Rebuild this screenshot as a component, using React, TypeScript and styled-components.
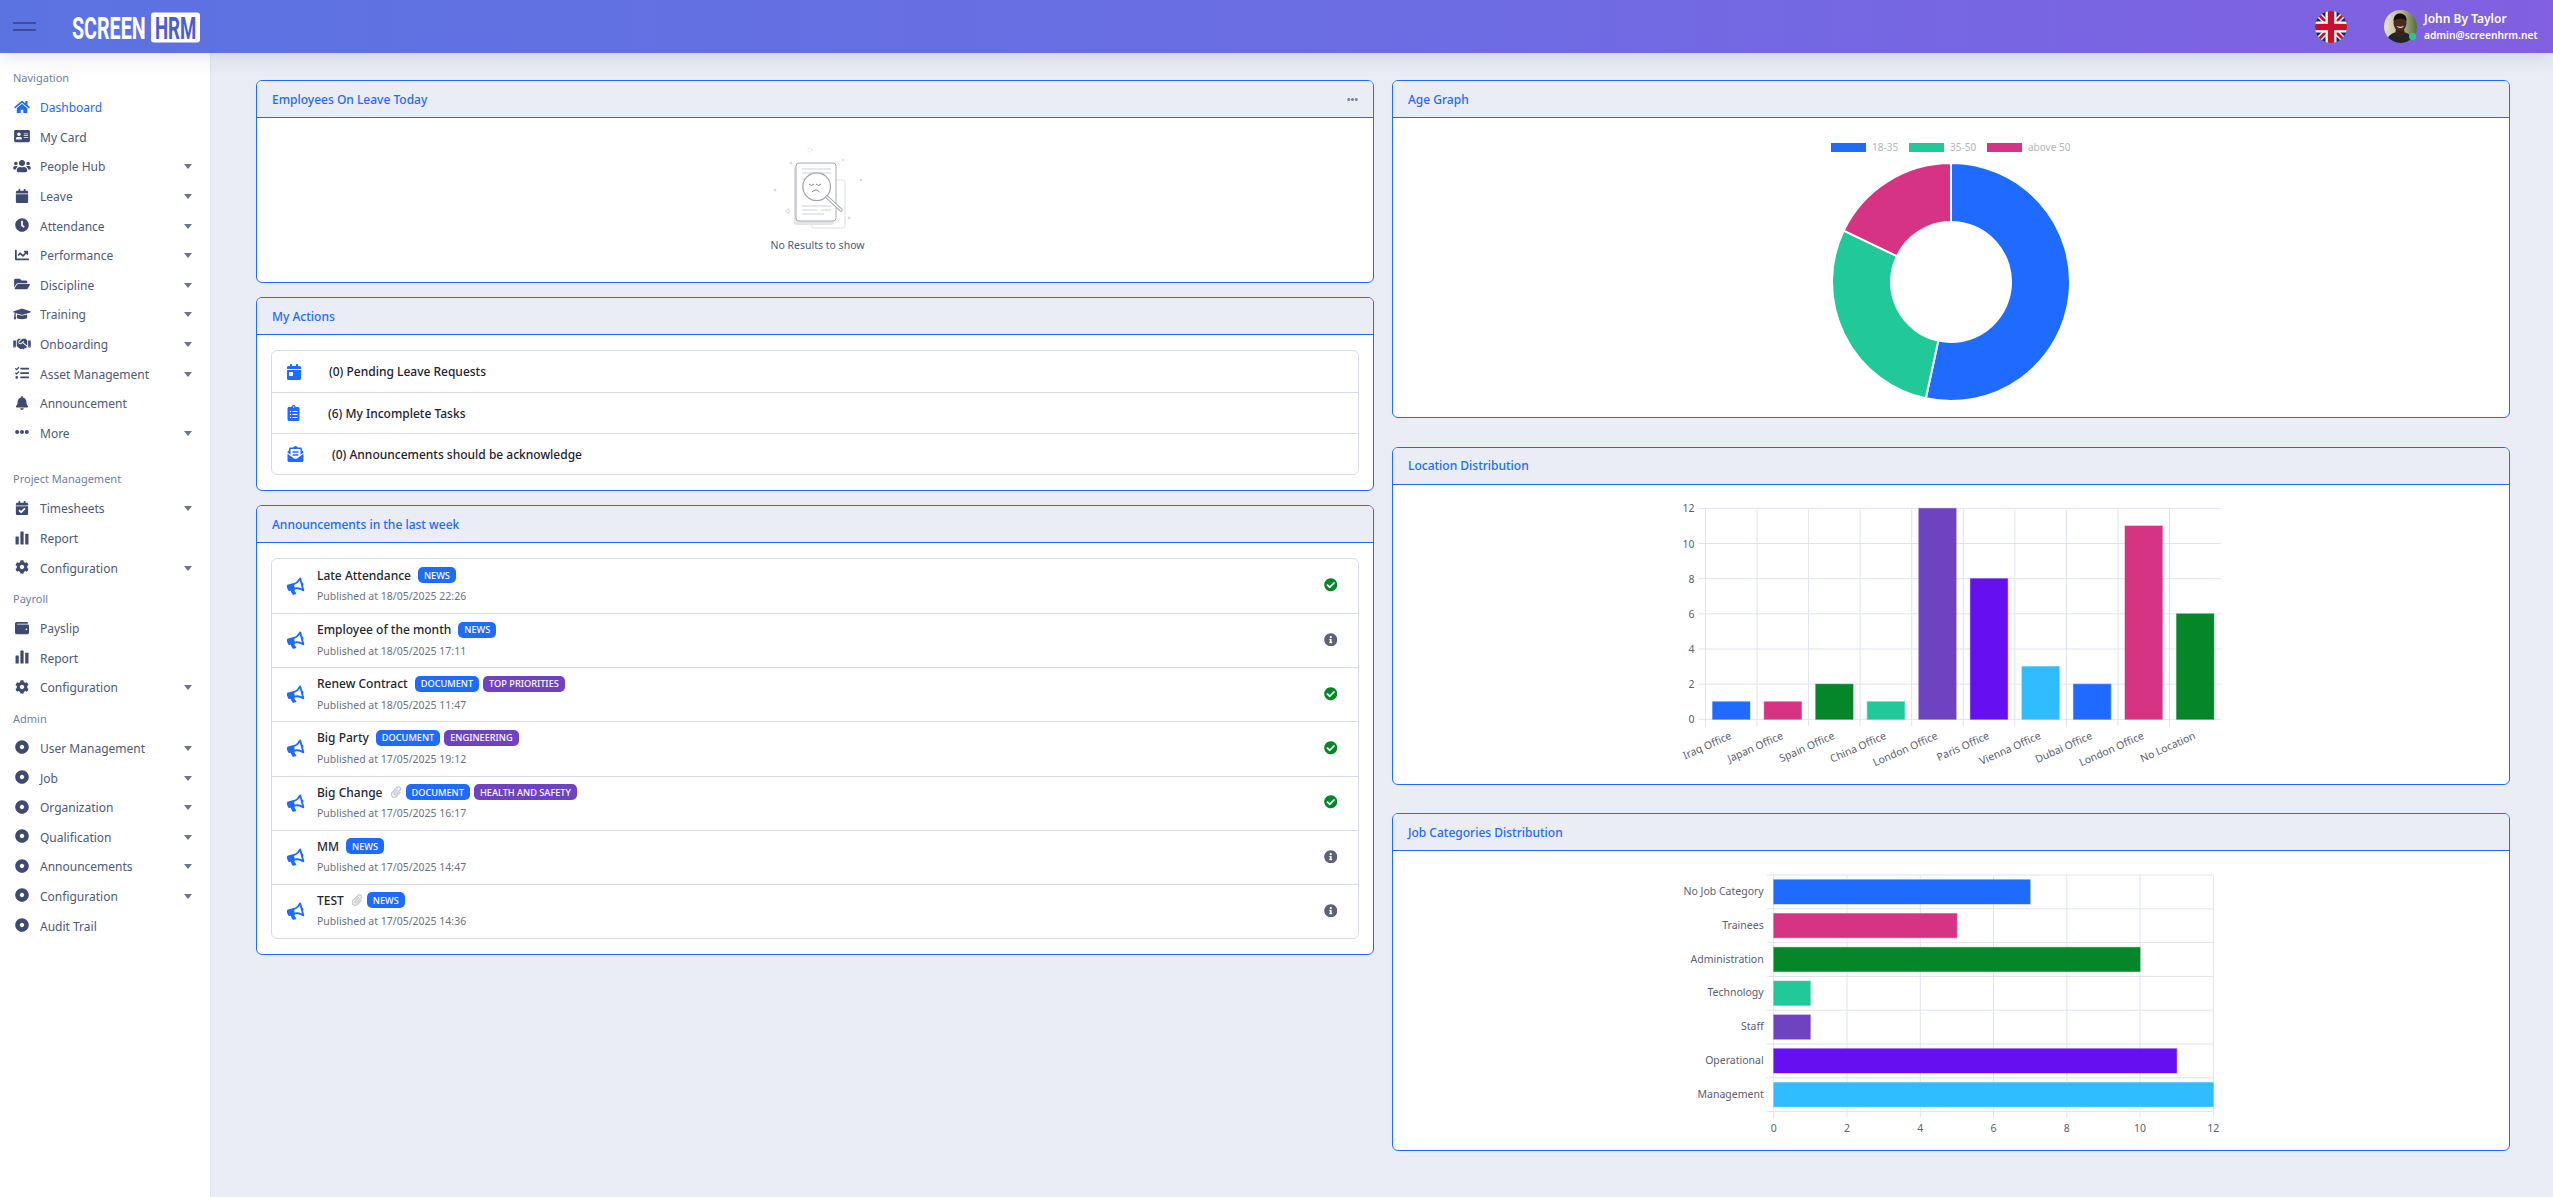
import type { ReactNode } from "react";
import styled, { createGlobalStyle } from "styled-components";
import {
  FaAddressCard,
  FaBell,
  FaBullhorn,
  FaCalendar,
  FaCalendarCheck,
  FaCalendarDay,
  FaChartLine,
  FaCheckCircle,
  FaClipboardList,
  FaClock,
  FaCog,
  FaDotCircle,
  FaEllipsisH,
  FaEnvelopeOpenText,
  FaFolderOpen,
  FaGraduationCap,
  FaHandshake,
  FaHome,
  FaInfoCircle,
  FaPaperclip,
  FaTasks,
  FaUsers,
  FaWallet,
} from "react-icons/fa";

const BLUE = "#206bff";
const PINK = "#d63384";
const GREEN = "#058729";
const TEAL = "#20c997";
const PURPLE = "#6f42c1";
const VIOLET = "#6610f2";
const SKY = "#30bdff";
const PAGE_BG = "#eaedf5";
const FONT = `"Noto Sans", "Liberation Sans", sans-serif`;

const GlobalStyle = createGlobalStyle`
  html, body {
    margin: 0;
    padding: 0;
    background: ${PAGE_BG};
    font-family: ${FONT};
    overflow: hidden;
  }
  * {
    box-sizing: border-box;
  }
`;

const Shell = styled.div`
  width: 2553px;
  height: 1197px;
  display: flex;
  flex-direction: column;
  overflow: hidden;
`;

const TopBar = styled.header`
  position: relative;
  z-index: 2;
  flex: none;
  height: 53px;
  display: flex;
  align-items: center;
  padding-left: 13px;
  padding-right: 14px;
  background: linear-gradient(90deg, #5b73e0 0%, #6a6ee2 50%, #8260e0 100%);
  box-shadow: 0 4px 20px rgba(50, 60, 90, 0.14);
`;

const Burger = styled.div`
  width: 23px;
  height: 9px;
  margin-right: 36px;
  border-top: 2px solid #3f4c96;
  border-bottom: 2px solid #3f4c96;
`;

const TopRight = styled.div`
  margin-left: auto;
  display: flex;
  align-items: center;
`;

const FlagBox = styled.div`
  width: 32px;
  height: 32px;
  margin-right: 37px;
  display: flex;
`;

const AvatarBox = styled.div`
  position: relative;
  width: 33px;
  height: 33px;
  margin-right: 7px;
  display: flex;
`;

const OnlineDot = styled.span`
  position: absolute;
  right: 1px;
  bottom: 3px;
  width: 7px;
  height: 7px;
  border-radius: 50%;
  background: #28c98b;
`;

const UserInfo = styled.div`
  display: flex;
  flex-direction: column;
  gap: 2px;
  width: 115px;
  color: #fff;
`;

const UserName = styled.span`
  font-size: 12px;
  font-weight: 600;
  line-height: 15px;
`;

const UserMail = styled.span`
  font-size: 10.2px;
  font-weight: 600;
  line-height: 15px;
`;

const Body = styled.div`
  flex: 1;
  display: flex;
  min-height: 0;
`;

const Sidebar = styled.nav`
  flex: none;
  width: 211px;
  padding-top: 10px;
  background: #fff;
  border-right: 1px solid #dfe3ec;
`;

const NavGroup = styled.div<{ $gap?: number }>`
  margin-bottom: ${(p) => p.$gap ?? 0}px;
`;

const NavLabel = styled.div`
  height: 30px;
  line-height: 30px;
  padding-left: 13px;
  font-size: 11px;
  color: #6f80a3;
`;

const NavItem = styled.div<{ $active?: boolean }>`
  height: 29.6px;
  display: flex;
  align-items: center;
  padding: 0 18px 0 10px;
  font-size: 12px;
  color: ${(p) => (p.$active ? BLUE : "#4d5a78")};
  svg {
    color: ${(p) => (p.$active ? BLUE : "#3e4a70")};
  }
`;

const NavIcon = styled.span`
  width: 24px;
  margin-right: 6px;
  margin-bottom: 2px;
  flex: none;
  display: flex;
  align-items: center;
  justify-content: center;
  svg {
    width: 18px;
    height: 14px;
  }
`;

const Caret = styled.span`
  margin-left: auto;
  width: 0;
  height: 0;
  border-left: 4.5px solid transparent;
  border-right: 4.5px solid transparent;
  border-top: 5px solid #6c7590;
`;

const Main = styled.main`
  flex: 1;
  min-width: 0;
  padding: 27px 0 0 45px;
  display: grid;
  grid-template-columns: 1118px 1118px;
  column-gap: 18px;
  align-content: start;
`;

const Column = styled.div<{ $gap: number }>`
  display: flex;
  flex-direction: column;
  gap: ${(p) => p.$gap}px;
`;

const Card = styled.section<{ $height?: number }>`
  height: ${(p) => (p.$height ? `${p.$height}px` : "auto")};
  display: flex;
  flex-direction: column;
  border: 1px solid ${BLUE};
  border-radius: 6px;
  background: #fff;
  overflow: hidden;
`;

const CardHeader = styled.div`
  flex: none;
  height: 37px;
  display: flex;
  align-items: center;
  justify-content: space-between;
  padding: 0 15px;
  background: ${PAGE_BG};
  border-bottom: 1px solid ${BLUE};
  color: ${BLUE};
  font-size: 12px;
  font-weight: 500;
`;

const DotsIcon = styled.span`
  display: flex;
  color: #7d8499;
  font-size: 11px;
`;

const CardBody = styled.div`
  flex: 1;
  padding: 15px 14px;
`;

const ChartBody = styled.div`
  flex: 1;
  display: flex;
  justify-content: center;
`;

const EmptyBody = styled.div`
  flex: 1;
  display: flex;
  flex-direction: column;
  align-items: center;
  padding: 27px 0 0 5px;
`;

const EmptyText = styled.div`
  margin-top: 9px;
  font-size: 10.5px;
  line-height: 14px;
  color: #4a5b7a;
`;

const ListBox = styled.div`
  border: 1px solid #d8dce6;
  border-radius: 6px;
`;

const ActionRow = styled.div`
  height: 41px;
  display: flex;
  align-items: center;
  padding-left: 15px;
  font-size: 12px;
  font-weight: 500;
  color: #1d2130;
  & + & {
    border-top: 1px solid #d8dce6;
  }
`;

const ActionIcon = styled.span<{ $w: number }>`
  width: ${(p) => p.$w}px;
  display: flex;
  color: ${BLUE};
  margin-right: 28px;
  svg {
    width: 100%;
    height: 16px;
  }
`;

const NoticeRow = styled.div`
  height: 54.15px;
  display: flex;
  align-items: center;
  padding: 0 21px 0 15px;
  & + & {
    border-top: 1px solid #d8dce6;
  }
`;

const NoticeIcon = styled.span`
  flex: none;
  width: 30px;
  display: flex;
  font-size: 17px;
  color: ${BLUE};
  svg {
    transform: rotate(-15deg);
  }
`;

const NoticeText = styled.div`
  display: flex;
  flex-direction: column;
  gap: 6px;
  padding-bottom: 2px;
`;

const NoticeTitle = styled.div`
  display: flex;
  align-items: center;
  height: 16px;
  font-size: 12px;
  font-weight: 500;
  color: #22262f;
`;

const NoticeTime = styled.div`
  font-size: 10.5px;
  line-height: 14px;
  color: #6b7280;
`;

const Clip = styled.span`
  display: flex;
  margin-left: 7px;
  font-size: 12px;
  color: #c9cdd8;
`;

const Badge = styled.span<{ $tone: string }>`
  height: 16px;
  display: inline-flex;
  align-items: center;
  padding: 0 6px;
  margin-left: 4px;
  border-radius: 5px;
  background: ${(p) => p.$tone};
  color: #fff;
  font-size: 9.2px;
  font-weight: 500;
  &:first-of-type {
    margin-left: 7px;
  }
`;

const StatusIcon = styled.span<{ $tone: string }>`
  margin-left: auto;
  margin-bottom: 2px;
  display: flex;
  font-size: 13.5px;
  color: ${(p) => p.$tone};
`;

type NavEntry = { label: string; icon: ReactNode; caret?: boolean; active?: boolean };

function ReportIcon() {
  return (
    <svg viewBox="0 0 13 13" fill="currentColor">
      <rect x="0.5" y="5" width="3" height="7.5" rx="0.5" />
      <rect x="5" y="0.5" width="3" height="12" rx="0.5" />
      <rect x="9.5" y="2.5" width="3" height="10" rx="0.5" />
    </svg>
  );
}

const navSections: { title: string; gap: number; items: NavEntry[] }[] = [
  {
    title: "Navigation",
    gap: 16,
    items: [
      { label: "Dashboard", icon: <FaHome />, active: true },
      { label: "My Card", icon: <FaAddressCard /> },
      { label: "People Hub", icon: <FaUsers />, caret: true },
      { label: "Leave", icon: <FaCalendar />, caret: true },
      { label: "Attendance", icon: <FaClock />, caret: true },
      { label: "Performance", icon: <FaChartLine />, caret: true },
      { label: "Discipline", icon: <FaFolderOpen />, caret: true },
      { label: "Training", icon: <FaGraduationCap />, caret: true },
      { label: "Onboarding", icon: <FaHandshake />, caret: true },
      { label: "Asset Management", icon: <FaTasks />, caret: true },
      { label: "Announcement", icon: <FaBell /> },
      { label: "More", icon: <FaEllipsisH />, caret: true },
    ],
  },
  {
    title: "Project Management",
    gap: 1,
    items: [
      { label: "Timesheets", icon: <FaCalendarCheck />, caret: true },
      { label: "Report", icon: <ReportIcon /> },
      { label: "Configuration", icon: <FaCog />, caret: true },
    ],
  },
  {
    title: "Payroll",
    gap: 1,
    items: [
      { label: "Payslip", icon: <FaWallet /> },
      { label: "Report", icon: <ReportIcon /> },
      { label: "Configuration", icon: <FaCog />, caret: true },
    ],
  },
  {
    title: "Admin",
    gap: 0,
    items: [
      { label: "User Management", icon: <FaDotCircle />, caret: true },
      { label: "Job", icon: <FaDotCircle />, caret: true },
      { label: "Organization", icon: <FaDotCircle />, caret: true },
      { label: "Qualification", icon: <FaDotCircle />, caret: true },
      { label: "Announcements", icon: <FaDotCircle />, caret: true },
      { label: "Configuration", icon: <FaDotCircle />, caret: true },
      { label: "Audit Trail", icon: <FaDotCircle /> },
    ],
  },
];

const actions = [
  { text: "(0) Pending Leave Requests", icon: <FaCalendarDay />, w: 14 },
  { text: "(6) My Incomplete Tasks", icon: <FaClipboardList />, w: 13 },
  { text: "(0) Announcements should be acknowledge", icon: <FaEnvelopeOpenText />, w: 17 },
];

const notices: {
  title: string;
  time: string;
  clip?: boolean;
  done: boolean;
  tags: [string, string][];
}[] = [
  { title: "Late Attendance", time: "18/05/2025 22:26", done: true, tags: [["NEWS", BLUE]] },
  { title: "Employee of the month", time: "18/05/2025 17:11", done: false, tags: [["NEWS", BLUE]] },
  {
    title: "Renew Contract",
    time: "18/05/2025 11:47",
    done: true,
    tags: [
      ["DOCUMENT", BLUE],
      ["TOP PRIORITIES", PURPLE],
    ],
  },
  {
    title: "Big Party",
    time: "17/05/2025 19:12",
    done: true,
    tags: [
      ["DOCUMENT", BLUE],
      ["ENGINEERING", PURPLE],
    ],
  },
  {
    title: "Big Change",
    time: "17/05/2025 16:17",
    clip: true,
    done: true,
    tags: [
      ["DOCUMENT", BLUE],
      ["HEALTH AND SAFETY", PURPLE],
    ],
  },
  { title: "MM", time: "17/05/2025 14:47", done: false, tags: [["NEWS", BLUE]] },
  { title: "TEST", time: "17/05/2025 14:36", clip: true, done: false, tags: [["NEWS", BLUE]] },
];

function Logo() {
  return (
    <svg width="130" height="44" viewBox="0 0 130 44">
      <text
        transform="translate(0 33.5) scale(0.635 1)"
        fill="#fff"
        fontFamily="Roboto, sans-serif"
        fontWeight="700"
        fontSize="31"
      >
        SCREEN
      </text>
      <rect x="79" y="7.5" width="49" height="30" rx="3" fill="#fff" />
      <text
        transform="translate(83 33.5) scale(0.6 1)"
        fill="#4a5dcf"
        fontFamily="Roboto, sans-serif"
        fontWeight="700"
        fontSize="31"
      >
        HRM
      </text>
    </svg>
  );
}

function UkFlag() {
  return (
    <svg width="32" height="32" viewBox="0 0 32 32">
      <defs>
        <clipPath id="flagClip">
          <circle cx="16" cy="16" r="16" />
        </clipPath>
      </defs>
      <g clipPath="url(#flagClip)">
        <rect width="32" height="32" fill="#0a2a6e" />
        <path d="M-2 2 L2 -2 L34 30 L30 34 Z M30 -2 L34 2 L2 34 L-2 30 Z" fill="#fff" />
        <path d="M-2 0 L0 -2 L34 32 L32 34 Z M32 -2 L34 0 L0 34 L-2 32 Z" fill="#c8102e" />
        <rect x="10.5" width="11" height="32" fill="#fff" />
        <rect y="10.5" width="32" height="11" fill="#fff" />
        <rect x="12.8" width="6.4" height="32" fill="#c8102e" />
        <rect y="12.8" width="32" height="6.4" fill="#c8102e" />
      </g>
    </svg>
  );
}

function Avatar() {
  return (
    <svg width="33" height="33" viewBox="0 0 33 33">
      <defs>
        <clipPath id="avatarClip">
          <circle cx="16.5" cy="16.5" r="16.5" />
        </clipPath>
        <linearGradient id="avatarBg" x1="0" x2="1" y1="0" y2="0">
          <stop offset="0" stopColor="#e9e2d8" />
          <stop offset="0.55" stopColor="#b9b48e" />
          <stop offset="1" stopColor="#4f6e3a" />
        </linearGradient>
      </defs>
      <g clipPath="url(#avatarClip)">
        <rect width="33" height="33" fill="url(#avatarBg)" />
        <path d="M2 33 C3 25 9 22 16 22 C23 22 29 25 30 33 Z" fill="#23242b" />
        <path d="M12 19 L20 19 L21 24 L16 28 L11 24 Z" fill="#3a2418" />
        <ellipse cx="16" cy="13" rx="6.5" ry="8" fill="#4a2d1e" />
        <path d="M9.5 11 C9.5 5 13 3.5 16 3.5 C19.5 3.5 23 5.5 22.5 11 C20 8 13 8 9.5 11 Z" fill="#15100c" />
        <path d="M12.5 16 C14 18.5 18.5 18.5 20 16 C18 17 14.5 17 12.5 16 Z" fill="#efe8de" />
      </g>
    </svg>
  );
}

function EmptyPicture() {
  return (
    <svg width="110" height="84" viewBox="-6 -5 110 84">
      <g fill="none" stroke="#c9ccd1" strokeWidth="0.8">
        <circle cx="41" cy="0" r="2" strokeDasharray="1 1" />
        <path d="M20.5 13h3M22 11.500v3M4.500 40h3M6 38.500v3M73 10h2M74 9v2M91 29l2 2M93 29l-2 2M78.500 68h3M80 66.500v3" />
        <path d="M20 63.500l-3.500 -2.500 3.500 -2.500z" />
      </g>
      <rect x="43" y="30" width="33" height="48" rx="2" fill="#fff" stroke="#dcdee2" strokeWidth="1" />
      <rect x="25" y="16" width="40" height="59" rx="3" fill="#e3e4e7" />
      <rect x="27" y="13" width="40" height="58" rx="3" fill="#fff" stroke="#a9acb2" strokeWidth="1" />
      <path
        d="M33 19h29M33 23h29M33 29h6M33 34h6M33 39h5M33 56h29M33 60h15M52 60h10M33 64h22"
        stroke="#dfe1e4"
        strokeWidth="1.600"
      />
      <circle cx="47.700" cy="36.700" r="13.800" fill="#fff" stroke="#a3a6ac" strokeWidth="1.200" />
      <path d="M58 47 L72 60" stroke="#a3a6ac" strokeWidth="3.400" strokeLinecap="round" />
      <path d="M58 47 L72 60" stroke="#fff" strokeWidth="1.600" strokeLinecap="round" />
      <path
        d="M40 34l2.500 1.500 2.500 -1.500M47 34l2.500 1.500 2.500 -1.500M43 42q4 -4 7.500 0"
        fill="none"
        stroke="#70747b"
        strokeWidth="0.900"
      />
    </svg>
  );
}

const tickText = { fontFamily: FONT, fontSize: 10.5, fill: "#5c6070" };
const GRID = "#e0e4ef";

function AgeChart() {
  const cx = 300;
  const cy = 164;
  const slices = [
    { from: 0, to: 192.2, color: BLUE },
    { from: 192.2, to: 295.6, color: TEAL },
    { from: 295.6, to: 360, color: PINK },
  ];
  const point = (r: number, deg: number) => {
    const a = (deg * Math.PI) / 180;
    return `${(cx + r * Math.sin(a)).toFixed(2)} ${(cy - r * Math.cos(a)).toFixed(2)}`;
  };
  const legend = [
    { x: 180, text: "18-35", color: BLUE },
    { x: 258, text: "35-50", color: TEAL },
    { x: 336, text: "above 50", color: PINK },
  ];
  return (
    <svg width="600" height="298" viewBox="0 0 600 298">
      {legend.map((l) => (
        <g key={l.text}>
          <rect x={l.x} y={25} width={35} height={9} fill={l.color} />
          <text x={l.x + 41} y={32.5} fontFamily={FONT} fontSize="10" fill="#b4b5bd">
            {l.text}
          </text>
        </g>
      ))}
      {slices.map((s) => (
        <path
          key={s.color}
          d={`M${point(119, s.from)} A119 119 0 ${s.to - s.from > 180 ? 1 : 0} 1 ${point(119, s.to)} L${point(60, s.to)} A60 60 0 ${s.to - s.from > 180 ? 1 : 0} 0 ${point(60, s.from)} Z`}
          fill={s.color}
          stroke="#fff"
          strokeWidth="2"
        />
      ))}
    </svg>
  );
}

function LocationChart() {
  const x0 = 54.5;
  const step = 51.55;
  const y0 = 234.3;
  const unit = 17.58;
  const bars = [
    { label: "Iraq Office", value: 1, color: BLUE },
    { label: "Japan Office", value: 1, color: PINK },
    { label: "Spain Office", value: 2, color: GREEN },
    { label: "China Office", value: 1, color: TEAL },
    { label: "London Office", value: 12, color: PURPLE },
    { label: "Paris Office", value: 8, color: VIOLET },
    { label: "Vienna Office", value: 3, color: SKY },
    { label: "Dubai Office", value: 2, color: BLUE },
    { label: "London Office", value: 11, color: PINK },
    { label: "No Location", value: 6, color: GREEN },
  ];
  return (
    <svg width="600" height="298" viewBox="0 0 600 298">
      {[0, 2, 4, 6, 8, 10, 12].map((v) => {
        const y = y0 - v * unit;
        return (
          <g key={v}>
            <line x1={x0 - 7} x2={x0 + step * 10} y1={y} y2={y} stroke={GRID} />
            <text {...tickText} x={x0 - 11} y={y + 4} textAnchor="end">
              {v}
            </text>
          </g>
        );
      })}
      {bars.map((_, i) => (
        <line key={i} x1={x0 + i * step} x2={x0 + i * step} y1={y0 - 12 * unit} y2={y0 + 7} stroke={GRID} />
      ))}
      {bars.map((b, i) => {
        const center = x0 + (i + 0.5) * step;
        return (
          <g key={i}>
            <rect
              x={center - 18.7}
              y={y0 - b.value * unit}
              width={37.4}
              height={b.value * unit}
              fill={b.color}
              stroke={b.color}
              strokeOpacity="0.45"
            />
            <text
              {...tickText}
              x={center + 1}
              y={y0 + 19}
              textAnchor="end"
              transform={`rotate(-24 ${center + 1} ${y0 + 19})`}
            >
              {b.label}
            </text>
          </g>
        );
      })}
    </svg>
  );
}

function JobChart() {
  const x0 = 122.7;
  const unit = 36.64;
  const y0 = 24;
  const step = 33.8;
  const bars = [
    { label: "No Job Category", value: 7, color: BLUE },
    { label: "Trainees", value: 5, color: PINK },
    { label: "Administration", value: 10, color: GREEN },
    { label: "Technology", value: 1, color: TEAL },
    { label: "Staff", value: 1, color: PURPLE },
    { label: "Operational", value: 11, color: VIOLET },
    { label: "Management", value: 12, color: SKY },
  ];
  return (
    <svg width="600" height="298" viewBox="0 0 600 298">
      {[0, 1, 2, 3, 4, 5, 6, 7].map((i) => (
        <line key={i} x1={x0 - 7} x2={x0 + 12 * unit} y1={y0 + i * step} y2={y0 + i * step} stroke={GRID} />
      ))}
      {[0, 2, 4, 6, 8, 10, 12].map((v) => (
        <g key={v}>
          <line x1={x0 + v * unit} x2={x0 + v * unit} y1={y0} y2={y0 + 7 * step + 6} stroke={GRID} />
          <text {...tickText} x={x0 + v * unit} y={y0 + 7 * step + 20} textAnchor="middle">
            {v}
          </text>
        </g>
      ))}
      {bars.map((b, i) => (
        <g key={b.label}>
          <rect
            x={x0}
            y={y0 + i * step + 4.7}
            width={b.value * unit}
            height={24.3}
            fill={b.color}
            stroke={b.color}
            strokeOpacity="0.45"
          />
          <text {...tickText} x={x0 - 10} y={y0 + i * step + 20} textAnchor="end">
            {b.label}
          </text>
        </g>
      ))}
    </svg>
  );
}

export default function App() {
  return (
    <Shell>
      <GlobalStyle />
      <TopBar>
        <Burger />
        <Logo />
        <TopRight>
          <FlagBox>
            <UkFlag />
          </FlagBox>
          <AvatarBox>
            <Avatar />
            <OnlineDot />
          </AvatarBox>
          <UserInfo>
            <UserName>John By Taylor</UserName>
            <UserMail>admin@screenhrm.net</UserMail>
          </UserInfo>
        </TopRight>
      </TopBar>
      <Body>
        <Sidebar>
          {navSections.map((section) => (
            <NavGroup key={section.title} $gap={section.gap}>
              <NavLabel>{section.title}</NavLabel>
              {section.items.map((item) => (
                <NavItem key={item.label} $active={item.active}>
                  <NavIcon>{item.icon}</NavIcon>
                  {item.label}
                  {item.caret && <Caret />}
                </NavItem>
              ))}
            </NavGroup>
          ))}
        </Sidebar>
        <Main>
          <Column $gap={14}>
            <Card $height={203}>
              <CardHeader>
                Employees On Leave Today
                <DotsIcon>
                  <FaEllipsisH />
                </DotsIcon>
              </CardHeader>
              <EmptyBody>
                <EmptyPicture />
                <EmptyText>No Results to show</EmptyText>
              </EmptyBody>
            </Card>
            <Card>
              <CardHeader>My Actions</CardHeader>
              <CardBody>
                <ListBox>
                  {actions.map((a) => (
                    <ActionRow key={a.text}>
                      <ActionIcon $w={a.w}>{a.icon}</ActionIcon>
                      {a.text}
                    </ActionRow>
                  ))}
                </ListBox>
              </CardBody>
            </Card>
            <Card>
              <CardHeader>Announcements in the last week</CardHeader>
              <CardBody>
                <ListBox>
                  {notices.map((n) => (
                    <NoticeRow key={n.title}>
                      <NoticeIcon>
                        <FaBullhorn />
                      </NoticeIcon>
                      <NoticeText>
                        <NoticeTitle>
                          {n.title}
                          {n.clip && (
                            <Clip>
                              <FaPaperclip />
                            </Clip>
                          )}
                          {n.tags.map(([tag, tone]) => (
                            <Badge key={tag} $tone={tone}>
                              {tag}
                            </Badge>
                          ))}
                        </NoticeTitle>
                        <NoticeTime>Published at {n.time}</NoticeTime>
                      </NoticeText>
                      <StatusIcon $tone={n.done ? GREEN : "#5b6178"}>
                        {n.done ? <FaCheckCircle /> : <FaInfoCircle />}
                      </StatusIcon>
                    </NoticeRow>
                  ))}
                </ListBox>
              </CardBody>
            </Card>
          </Column>
          <Column $gap={28.5}>
            <Card $height={338}>
              <CardHeader>Age Graph</CardHeader>
              <ChartBody>
                <AgeChart />
              </ChartBody>
            </Card>
            <Card $height={338}>
              <CardHeader>Location Distribution</CardHeader>
              <ChartBody>
                <LocationChart />
              </ChartBody>
            </Card>
            <Card $height={338}>
              <CardHeader>Job Categories Distribution</CardHeader>
              <ChartBody>
                <JobChart />
              </ChartBody>
            </Card>
          </Column>
        </Main>
      </Body>
    </Shell>
  );
}
